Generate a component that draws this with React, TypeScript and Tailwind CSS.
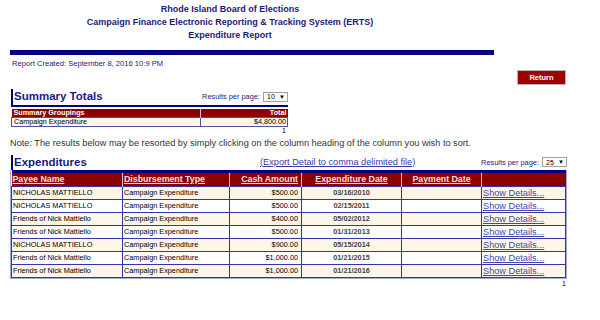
const rows = [
  { payee: 'NICHOLAS MATTIELLO', amount: '$500.00', date: '03/16/2010' },
  { payee: 'NICHOLAS MATTIELLO', amount: '$500.00', date: '02/15/2011' },
  { payee: 'Friends of Nick Mattiello', amount: '$400.00', date: '05/02/2012' },
  { payee: 'Friends of Nick Mattiello', amount: '$500.00', date: '01/31/2013' },
  { payee: 'NICHOLAS MATTIELLO', amount: '$900.00', date: '05/15/2014' },
  { payee: 'Friends of Nick Mattiello', amount: '$1,000.00', date: '01/21/2015' },
  { payee: 'Friends of Nick Mattiello', amount: '$1,000.00', date: '01/21/2016' },
]

// fake select box, like the browser default
function PageSize({ value }: { value: string }) {
  return (
    <div className="flex items-center gap-[3px]">
      <span className="text-[7.4px] text-[#1b1b78]">Results per page:</span>
      <div className="flex h-[10px] w-[25px] items-center justify-between border border-[#a0a0a0] bg-white pl-[3px] pr-[2px] text-[7px] leading-none text-black">
        <span>{value}</span>
        <span className="text-[6px]">▼</span>
      </div>
    </div>
  )
}

export default function App() {
  return (
    <div className="h-[320px] w-[600px] overflow-hidden bg-white font-['Liberation_Sans',Arial,sans-serif] text-[#1b1b78]">
      {/* page header */}
      <div className="w-[460px] pt-[3px] text-center text-[9px] font-bold leading-[13px] text-[#1b1b78]">
        <div>Rhode Island Board of Elections</div>
        <div>Campaign Finance Electronic Reporting &amp; Tracking System (ERTS)</div>
        <div>Expenditure Report</div>
      </div>
      <div className="ml-[10px] mt-[8px] h-[5px] w-[484px] bg-[#000080]" />

      <div className="ml-[12px] mt-[4px] text-[7.6px] leading-[10px] text-[#1b1b78]">
        Report Created: September 8, 2016 10:9 PM
      </div>

      <div className="mt-[1px] flex justify-end pr-[34px]">
        <button className="h-[15px] w-[49px] border border-[#b8b8b8] bg-[#a00000] text-[7.5px] font-bold text-white">
          Return
        </button>
      </div>

      {/* summary */}
      <div className="ml-[11px] mt-[4px] w-[277px]">
        <div className="flex h-[16px] items-center justify-between border-l-2 border-[#000080] pl-[1px]">
          <span className="text-[11.5px] font-bold text-[#1a1a80]">Summary Totals</span>
          <PageSize value="10" />
        </div>
        <div className="h-[2px] bg-[#000080]" />
        <table className="mt-[2px] w-full border-collapse text-[7.2px] leading-[8px]">
          <thead>
            <tr className="bg-[#8b0000] font-bold text-white">
              <td className="w-[189px] border-r border-[#d8c8c8] pl-[2px] text-left">Summary Groupings</td>
              <td className="pr-[1px] text-right">Total</td>
            </tr>
          </thead>
          <tbody>
            <tr className="bg-[#fdf5e6] text-black">
              <td className="h-[9px] border border-[#5050a8] pl-[2px]">Campaign Expenditure</td>
              <td className="border border-[#5050a8] pr-[1px] text-right">$4,800.00</td>
            </tr>
          </tbody>
        </table>
        <div className="pr-[2px] text-right text-[7px] leading-[8px] text-black">1</div>
      </div>

      <div className="ml-[10px] mt-[3px] text-[9.2px] leading-[11px] text-[#333]">
        Note: The results below may be resorted by simply clicking on the column heading of the column you wish to sort.
      </div>

      {/* expenditures */}
      <div className="ml-[10px] mt-[6px] w-[557px]">
        <div className="flex h-[15px] items-center">
          <div className="ml-[1px] w-[249px] border-l-2 border-[#000080] pl-[1px] text-[11.5px] font-bold leading-[15px] text-[#1a1a80]">
            Expenditures
          </div>
          <span className="text-[9.2px] text-[#3a3aa8] underline">(Export Detail to comma delimited file)</span>
          <div className="ml-auto">
            <PageSize value="25" />
          </div>
        </div>
        <div className="border border-[#a8a8d8] border-t-0">
          <table className="w-full table-fixed border-collapse border-t-[3px] border-[#000080] text-[7.3px] text-black">
            <colgroup>
              <col className="w-[111px]" />
              <col className="w-[107px]" />
              <col className="w-[72px]" />
              <col className="w-[100px]" />
              <col className="w-[80px]" />
              <col />
            </colgroup>
            <thead>
              <tr className="h-[12px] bg-[#8b0000] text-[8.8px] font-bold text-[#f8e0e0]">
                <td className="border-r border-[#d8c8c8] pl-[1px]"><span className="underline">Payee Name</span></td>
                <td className="border-r border-[#d8c8c8] pl-[1px]"><span className="underline">Disbursement Type</span></td>
                <td className="border-r border-[#d8c8c8] pr-[3px] text-right"><span className="underline">Cash Amount</span></td>
                <td className="border-r border-[#d8c8c8] text-center"><span className="underline">Expenditure Date</span></td>
                <td className="border-r border-[#d8c8c8] text-center"><span className="underline">Payment Date</span></td>
                <td />
              </tr>
            </thead>
            <tbody>
              {rows.map((r, i) => (
                <tr key={i} className={i % 2 === 0 ? 'h-[13px] bg-[#fdf5e6]' : 'h-[13px] bg-white'}>
                  <td className="border border-[#3535a5] pl-[1px] leading-[12px]">{r.payee}</td>
                  <td className="border border-[#3535a5] pl-[1px]">Campaign Expenditure</td>
                  <td className="border border-[#3535a5] pr-[3px] text-right">{r.amount}</td>
                  <td className="border border-[#3535a5] text-center font-bold text-[#444]">{r.date}</td>
                  <td className="border border-[#3535a5]" />
                  <td className="border border-[#3535a5] pl-[1px] text-[9.2px] leading-[12px] text-[#4444b0] underline">Show Details...</td>
                </tr>
              ))}
            </tbody>
          </table>
        </div>
        <div className="pr-[1px] text-right text-[7px] leading-[9px] text-black">1</div>
      </div>
    </div>
  )
}
